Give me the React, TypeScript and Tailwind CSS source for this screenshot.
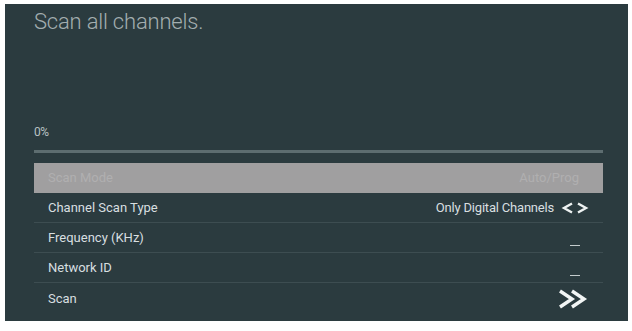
import React from "react";

const rows = [
  { label: "Channel Scan Type", kind: "value" },
  { label: "Frequency (KHz)", kind: "dash" },
  { label: "Network ID", kind: "dash" },
  { label: "Scan", kind: "go" },
];

export default function App() {
  return (
    <div
      className="w-[632px] h-[331px] bg-white pt-[4px] pl-[5px]"
      style={{ fontFamily: "Roboto, 'Liberation Sans', sans-serif" }}
    >
      <div className="w-[623px] h-[317px] bg-[#2b3b3f] pl-[29px] pr-[25px] flex flex-col">
        <div className="h-[40px] pt-[6px] text-[22px] leading-[24px] font-light text-[#a3aeb0] tracking-[-0.2px]">
          Scan all channels.
        </div>
        <div className="mt-[82px] h-[12px] text-[12px] leading-[12px] text-[#b8c2c3] tracking-[-0.5px]">0%</div>
        <div className="mt-[12px] h-[3px] bg-[#5d6d70]" />
        <div className="mt-[10px] h-[30px] bg-[#a09fa0] flex items-center justify-between pl-[14px] pr-[24px] text-[13px] text-[#b0afb0]">
          <span>Scan Mode</span>
          <span>Auto/Prog</span>
        </div>
        {rows.map((r, i) => (
          <div
            key={r.label}
            className={`h-[30px] flex items-center justify-between pl-[14px] pr-[14px] text-[13px] text-[#d8dfe0] ${
              i < rows.length - 1 ? "border-b border-[#3d4d51]" : ""
            }`}
          >
            <span className="mt-[1px]">{r.label}</span>
            {r.kind === "value" && (
              <span className="flex items-center gap-[7px] mt-[1px]">
                <span className="tracking-[-0.2px]">Only Digital Channels</span>
                <svg width="28" height="12" viewBox="0 0 28 12">
                  <polyline points="11,1.5 3,6 11,10.5" fill="none" stroke="#eef2f2" strokeWidth="2.4" />
                  <polyline points="17,1.5 25,6 17,10.5" fill="none" stroke="#eef2f2" strokeWidth="2.4" />
                </svg>
              </span>
            )}
            {r.kind === "dash" && (
              <span className="w-[10px] h-[1px] bg-[#c4cccd] mt-[16px] mr-[9px]" />
            )}
            {r.kind === "go" && (
              <svg width="32" height="20" viewBox="0 0 32 20" className="mt-[2px]">
                <polyline points="3,2 15,10 3,18" fill="none" stroke="#f2f5f5" strokeWidth="3.4" />
                <polyline points="15,2 27,10 15,18" fill="none" stroke="#f2f5f5" strokeWidth="3.4" />
              </svg>
            )}
          </div>
        ))}
      </div>
    </div>
  );
}
